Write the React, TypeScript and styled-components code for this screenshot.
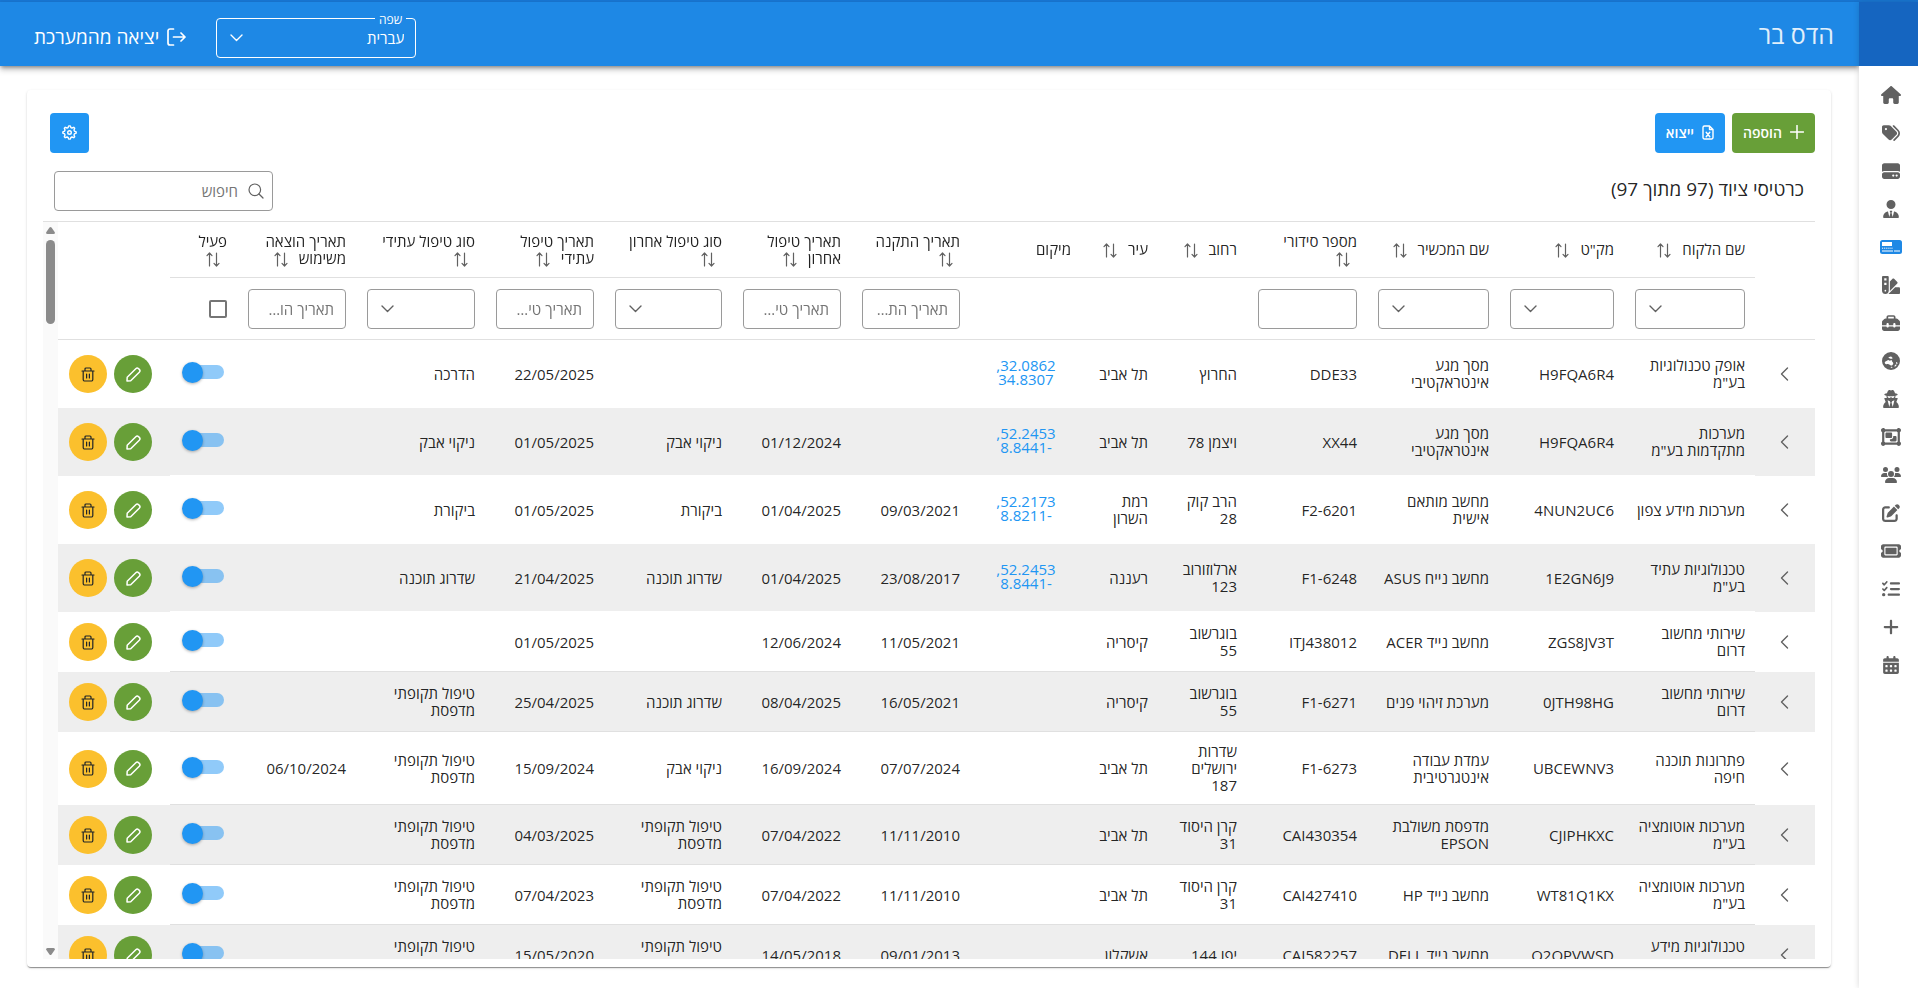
import React from "react";
import styled, { createGlobalStyle } from "styled-components";
import {
  FaHouse,
  FaTags,
  FaHardDrive,
  FaUserTie,
  FaSwatchbook,
  FaToolbox,
  FaEarthOceania,
  FaUserSecret,
  FaObjectGroup,
  FaUsers,
  FaPenToSquare,
  FaTicket,
  FaListCheck,
  FaPlus,
  FaCalendarDays,
} from "react-icons/fa6";

const color = {
  text: "rgba(0, 0, 0, 0.87)",
  muted: "#757575",
  icon: "#616161",
  line: "#e0e0e0",
  field: "#9a9a9a",
  stripe: "#eeeeee",
  header: "#1e88e5",
  brand: "#1565c0",
  top: "#1976d2",
  primary: "#2196f3",
  success: "#689f38",
  warning: "#fbc02d",
};

const GlobalStyle = createGlobalStyle`
  * { box-sizing: border-box; }
  body {
    margin: 0;
    background: #fff;
    color: ${color.text};
    font-family: "Open Sans", "Noto Sans", sans-serif;
    font-size: 15px;
    line-height: 17px;
  }
  button, input, select { font: inherit; color: inherit; }
`;

/* ---------- shell ---------- */

const Shell = styled.div`
  display: flex;
  height: 100vh;
  border-top: 2px solid ${color.top};
`;

const Sidebar = styled.nav`
  flex: none;
  display: flex;
  flex-direction: column;
  width: 59px;
  background: #fff;
  box-shadow: 0 0 6px rgba(0, 0, 0, 0.16);
  z-index: 2;
`;

const Brand = styled.div`
  height: 64px;
  background: ${color.brand};
`;

const NavList = styled.ul`
  display: flex;
  flex-direction: column;
  margin: 0;
  padding: 10px 0 0 5px;
  list-style: none;
`;

const NavLink = styled.a<{ $active?: boolean }>`
  display: flex;
  align-items: center;
  justify-content: center;
  height: 38px;
  color: ${(p) => (p.$active ? color.header : color.icon)};

  svg {
    width: ${(p) => (p.$active ? 22 : 20)}px;
    height: ${(p) => (p.$active ? 14 : 18)}px;
  }
`;

const Main = styled.div`
  flex: 1;
  min-width: 0;
  display: flex;
  flex-direction: column;
`;

const Header = styled.header`
  flex: none;
  display: flex;
  align-items: center;
  gap: 30px;
  height: 64px;
  padding: 0 25px 0 34px;
  background: ${color.header};
  color: #fff;
  box-shadow: 0 2px 4px -1px rgba(0, 0, 0, 0.4), 0 4px 6px rgba(0, 0, 0, 0.2);
  z-index: 1;
`;

const UserName = styled.h1`
  flex: 1;
  margin: 0;
  font-size: 25px;
  line-height: 32px;
  font-weight: 400;
  opacity: 0.87;
`;

const LanguageField = styled.div`
  position: relative;
  margin-top: 8px;
  width: 200px;
`;

const LanguageLabel = styled.label`
  position: absolute;
  top: -7px;
  right: 10px;
  padding: 0 4px;
  background: ${color.header};
  font-size: 12px;
  line-height: 17px;
`;

const Logout = styled.button`
  display: flex;
  align-items: center;
  gap: 8px;
  margin-top: 6px;
  padding: 0;
  border: 0;
  background: none;
  font-size: 19px;
  line-height: 24px;
  font-weight: 500;
  cursor: pointer;
`;

/* ---------- fields ---------- */

const SelectBox = styled.div<{ $light?: boolean }>`
  position: relative;
  color: ${(p) => (p.$light ? "#fff" : color.icon)};

  select {
    appearance: none;
    display: block;
    width: 100%;
    height: 40px;
    padding: 0 11px;
    border: 1px solid ${(p) => (p.$light ? "#fff" : color.field)};
    border-radius: 4px;
    background: transparent;
  }

  option { color: ${color.text}; }

  svg {
    position: absolute;
    left: 14px;
    top: 16px;
    pointer-events: none;
  }
`;

const TextField = styled.input`
  display: block;
  width: 100%;
  height: 40px;
  padding: 0 11px 0 12px;
  border: 1px solid ${color.field};
  border-radius: 4px;
  background: #fff;
  text-overflow: ellipsis;

  &::placeholder { color: ${color.muted}; opacity: 1; text-overflow: ellipsis; }
`;

const SearchField = styled.div`
  position: relative;
  width: 219px;

  input { padding-inline-start: 34px; }

  svg {
    position: absolute;
    right: 9px;
    top: 12px;
    color: ${color.icon};
  }
`;

const CheckBox = styled.input`
  appearance: none;
  display: block;
  width: 18px;
  height: 18px;
  margin: 0;
  border: 2px solid ${color.muted};
  border-radius: 2px;
`;

const Toggle = styled.input`
  appearance: none;
  position: relative;
  display: block;
  width: 38px;
  height: 14px;
  margin: 0 3px 4px;
  border-radius: 7px;
  background: rgba(33, 150, 243, 0.5);
  cursor: pointer;

  &::before {
    content: "";
    position: absolute;
    top: -3px;
    left: -4px;
    width: 21px;
    height: 21px;
    border-radius: 50%;
    background: ${color.primary};
    box-shadow: 0 1px 3px rgba(0, 0, 0, 0.3);
  }
`;

/* ---------- card ---------- */

const Card = styled.main`
  flex: 1;
  min-height: 0;
  display: flex;
  flex-direction: column;
  margin: 24px 28px 21px 27px;
  padding: 23px 16px 8px;
  border-radius: 4px;
  background: #fff;
  box-shadow: 0 2px 1px -1px rgba(0, 0, 0, 0.28), 0 1px 1px rgba(0, 0, 0, 0.16),
    0 1px 3px rgba(0, 0, 0, 0.12);
`;

const Toolbar = styled.div`
  display: flex;
  gap: 7px;
  padding-left: 7px;
`;

const Spacer = styled.div`
  flex: 1;
`;

const ActionButton = styled.button<{ $tone: "primary" | "success" }>`
  display: flex;
  align-items: center;
  justify-content: center;
  gap: 8px;
  height: 40px;
  min-width: 39px;
  padding: 0 11px 2px;
  border: 0;
  border-radius: 4px;
  background: ${(p) => color[p.$tone]};
  color: #fff;
  font-size: 14px;
  font-weight: 600;
  cursor: pointer;
`;

const TableTop = styled.div`
  display: flex;
  align-items: center;
  justify-content: space-between;
  padding: 18px 11px 10px;
  border-bottom: 1px solid ${color.line};
`;

const TableTitle = styled.h2`
  margin: 0 0 4px;
  font-size: 19px;
  line-height: 24px;
  font-weight: 400;
`;

const TableArea = styled.div`
  flex: 1;
  min-height: 0;
  display: flex;
`;

const Viewport = styled.div`
  flex: 1;
  min-width: 0;
  overflow: auto;
  scrollbar-width: none;
`;

const ScrollTrack = styled.div`
  flex: none;
  display: flex;
  flex-direction: column;
  align-items: center;
  width: 15px;
  padding: 5px 0 4px;
  background: #fafafa;
  color: #8b8b8b;
`;

const ScrollThumb = styled.div`
  width: 9px;
  height: 84px;
  margin: 6px 0 auto;
  border-radius: 5px;
  background: currentColor;
`;

/* ---------- table ---------- */

const Table = styled.table`
  width: 100%;
  table-layout: fixed;
  border-collapse: separate;
  border-spacing: 0;

  thead {
    position: sticky;
    top: 0;
    z-index: 1;
    background: #fff;
  }
`;

const Column = styled.col<{ $width: number }>`
  width: ${(p) => p.$width}px;
`;

const HeadCell = styled.th<{ $bare?: boolean }>`
  height: 56px;
  padding: 0 10px 0 11px;
  border-bottom: 1px solid ${(p) => (p.$bare ? "transparent" : color.line)};
  font-weight: 400;
  text-align: right;

  svg {
    margin-inline-start: 7px;
    vertical-align: -3px;
  }
`;

const FilterCell = styled.td`
  height: 62px;
  padding: 0 10px 0 11px;
  border-bottom: 1px solid ${color.line};
`;

const Row = styled.tr<{ $located: boolean }>`
  height: ${(p) => (p.$located ? 68 : 60)}px;
  --rule: ${(p) => (p.$located ? "#fff" : color.line)};

  &:nth-child(even) { background: ${color.stripe}; }
`;

const Cell = styled.td<{ $frozen?: boolean }>`
  padding: 11px 10px 11px 11px;
  text-align: right;
  white-space: pre-line;
  box-shadow: ${(p) => (p.$frozen ? "none" : "inset 0 -1px var(--rule)")};
`;

const ExpandButton = styled.button`
  display: flex;
  margin: 0 auto;
  padding: 0 2px 0 0;
  border: 0;
  background: none;
  color: ${color.icon};
  cursor: pointer;
`;

const MapLink = styled.a`
  display: block;
  padding-bottom: 4px;
  line-height: 14px;
  text-align: center;
  text-decoration: none;
  color: ${color.primary};
`;

const RowActions = styled.div`
  display: flex;
  justify-content: flex-end;
  gap: 7px;
`;

const RoundButton = styled.button<{ $tone: "success" | "warning" }>`
  flex: none;
  display: flex;
  align-items: center;
  justify-content: center;
  width: 38px;
  height: 38px;
  padding: 0;
  border: 0;
  border-radius: 50%;
  background: ${(p) => color[p.$tone]};
  color: ${(p) => (p.$tone === "warning" ? "#212529" : "#fff")};
  cursor: pointer;
`;

/* ---------- icons ---------- */

const lineIcon = {
  fill: "none",
  stroke: "currentColor",
  strokeLinecap: "round",
  strokeLinejoin: "round",
} as const;

const ChevronDown = () => (
  <svg width="13" height="8" viewBox="0 0 13 8" {...lineIcon} strokeWidth="1.4">
    <path d="M1 1l5.5 5.5L12 1" />
  </svg>
);

const ChevronLeft = () => (
  <svg width="9" height="14" viewBox="0 0 9 14" {...lineIcon} strokeWidth="1.4">
    <path d="M7.5 1L1.500 7l6 6" />
  </svg>
);

const SortIcon = () => (
  <svg width="14" height="15" viewBox="0 0 14 15" {...lineIcon} strokeWidth="1.2" stroke={color.icon}>
    <path d="M3.500 14V1M1 3.600L3.500 1 6 3.600M10.500 1v13M8 11.400L10.500 14l2.500-2.600" />
  </svg>
);

const SearchIcon = () => (
  <svg width="16" height="16" viewBox="0 0 16 16" {...lineIcon} strokeWidth="1.2">
    <circle cx="6.800" cy="6.800" r="5.800" />
    <path d="M11 11l4 4" />
  </svg>
);

const LogoutIcon = () => (
  <svg width="19" height="18" viewBox="0 0 19 18" {...lineIcon} strokeWidth="1.700">
    <path d="M6.500 1H3a2 2 0 0 0-2 2v12a2 2 0 0 0 2 2h3.500M6.500 9H18M14 5l4 4-4 4" />
  </svg>
);

const PlusIcon = () => (
  <svg width="14" height="14" viewBox="0 0 14 14" {...lineIcon} strokeWidth="1.500">
    <path d="M7 0.500v13M0.500 7h13" />
  </svg>
);

const ExcelIcon = () => (
  <svg width="12" height="15" viewBox="0 0 12 15" {...lineIcon} strokeWidth="1.400">
    <path d="M7.500 1H2.500A1.500 1.500 0 0 0 1 2.500v10A1.500 1.500 0 0 0 2.500 14h7a1.500 1.500 0 0 0 1.500-1.500V4.500zM7.500 1v3.500H11M4.200 7.200l3.600 4.600M7.800 7.200l-3.600 4.600" />
  </svg>
);

/* Eight rounded teeth around a hub, four outline points to a tooth. */
const gearOutline = Array.from({ length: 32 }, (_, i) => {
  const radius = i % 4 < 2 ? 6.7 : 5.1;
  const angle = ((i - 0.5) / 32) * 2 * Math.PI;
  return `${(7.5 + radius * Math.sin(angle)).toFixed(2)},${(7.5 - radius * Math.cos(angle)).toFixed(2)}`;
}).join(" ");

const GearIcon = () => (
  <svg width="15" height="15" viewBox="0 0 15 15" {...lineIcon} strokeWidth="1.400">
    <polygon points={gearOutline} />
    <circle cx="7.500" cy="7.500" r="1.800" />
  </svg>
);

const PencilIcon = () => (
  <svg width="15" height="15" viewBox="0 0 15 15" {...lineIcon} strokeWidth="1.500">
    <path d="M1 14l.2-3.700 8.600-8.600a2 2 0 0 1 2.800 0l.7.700a2 2 0 0 1 0 2.800L4.700 13.800z" />
  </svg>
);

const TrashIcon = () => (
  <svg width="14" height="15" viewBox="0 0 14 15" {...lineIcon} strokeWidth="1.200">
    <path d="M1 4h12M4 4V2a1 1 0 0 1 1-1h4a1 1 0 0 1 1 1v2M2.200 4v8.500A1.500 1.500 0 0 0 3.700 14h6.600a1.500 1.500 0 0 0 1.500-1.500V4M5.600 7v4M8.400 7v4" />
  </svg>
);

const DeviceIcon = () => (
  <svg viewBox="0 0 22 14" fill="none">
    <rect width="22" height="14" rx="2.500" fill="currentColor" />
    <rect x="2" y="2" width="10" height="4" fill="#fff" />
    <path d="M2 8.200h11" stroke="#fff" strokeDasharray="1.200 0.900" />
    <path d="M2 11h11M14 11h6" stroke="#fff" />
  </svg>
);

const ArrowGlyph = ({ down = false }: { down?: boolean }) => (
  <svg width="9" height="7" viewBox="0 0 9 7" fill="currentColor">
    <path d={down ? "M0 1.500Q0 0 1.500 0h6Q9 0 9 1.500L5.500 6.500Q4.500 7.500 3.500 6.500z" : "M0 5.500Q0 7 1.500 7h6Q9 7 9 5.500L5.500.5Q4.500-.5 3.500.5z"} />
  </svg>
);

/* ---------- data ---------- */

const navItems = [
  { label: "בית", icon: <FaHouse /> },
  { label: "תגיות", icon: <FaTags /> },
  { label: "מלאי", icon: <FaHardDrive /> },
  { label: "לקוחות", icon: <FaUserTie /> },
  { label: "כרטיסי ציוד", icon: <DeviceIcon />, active: true },
  { label: "דגמים", icon: <FaSwatchbook /> },
  { label: "כלים", icon: <FaToolbox /> },
  { label: "אזורים", icon: <FaEarthOceania /> },
  { label: "סוכנים", icon: <FaUserSecret /> },
  { label: "קבוצות", icon: <FaObjectGroup /> },
  { label: "משתמשים", icon: <FaUsers /> },
  { label: "עריכה", icon: <FaPenToSquare /> },
  { label: "כרטיסים", icon: <FaTicket /> },
  { label: "משימות", icon: <FaListCheck /> },
  { label: "חדש", icon: <FaPlus /> },
  { label: "יומן", icon: <FaCalendarDays /> },
];

type Filter = "select" | "text" | "date" | "check" | "none";

type ColumnDef = {
  title: string;
  width: number;
  filter: Filter;
  sortable?: boolean;
  sortBelow?: boolean;
};

const columns: ColumnDef[] = [
  { title: "שם הלקוח", width: 131, filter: "select" },
  { title: 'מק"ט', width: 125, filter: "select" },
  { title: "שם המכשיר", width: 132, filter: "select" },
  { title: "מספר סידורי", width: 120, filter: "text", sortBelow: true },
  { title: "רחוב", width: 89, filter: "none" },
  { title: "עיר", width: 77, filter: "none" },
  { title: "מיקום", width: 111, filter: "none", sortable: false },
  { title: "תאריך התקנה", width: 119, filter: "date", sortBelow: true },
  { title: "תאריך טיפול אחרון", width: 119, filter: "date" },
  { title: "סוג טיפול אחרון", width: 128, filter: "select", sortBelow: true },
  { title: "תאריך טיפול עתידי", width: 119, filter: "date" },
  { title: "סוג טיפול עתידי", width: 129, filter: "select", sortBelow: true },
  { title: "תאריך הוצאה משימוש", width: 119, filter: "date" },
  { title: "פעיל", width: 67, filter: "check", sortBelow: true },
];

type Item = {
  client: string;
  sku: string;
  device: string;
  serial: string;
  street: string;
  city: string;
  location?: string;
  dates: [string, string, string, string];
  types: [string, string];
};

const periodic = "טיפול תקופתי\nמדפסת";

const items: Item[] = [
  { client: 'אופק טכנולוגיות\nבע"מ', sku: "H9FQA6R4", device: "מסך מגע\nאינטראקטיבי", serial: "DDE33", street: "החרוץ", city: "תל אביב", location: "32.0862,\n34.8307", dates: ["", "", "22/05/2025", ""], types: ["", "הדרכה"] },
  { client: 'מערכות\nמתקדמות בע"מ', sku: "H9FQA6R4", device: "מסך מגע\nאינטראקטיבי", serial: "XX44", street: "ויצמן 78", city: "תל אביב", location: "52.2453,\n-8.8441", dates: ["", "01/12/2024", "01/05/2025", ""], types: ["ניקוי אבק", "ניקוי אבק"] },
  { client: "מערכות מידע צפון", sku: "4NUN2UC6", device: "מחשב מותאם\nאישית", serial: "F2-6201", street: "הרב קוק\n28", city: "רמת\nהשרון", location: "52.2173,\n-8.8211", dates: ["09/03/2021", "01/04/2025", "01/05/2025", ""], types: ["ביקורת", "ביקורת"] },
  { client: 'טכנולוגיות עתיד\nבע"מ', sku: "1E2GN6J9", device: "מחשב נייח ASUS", serial: "F1-6248", street: "ארלוזורוב\n123", city: "רעננה", location: "52.2453,\n-8.8441", dates: ["23/08/2017", "01/04/2025", "21/04/2025", ""], types: ["שדרוג תוכנה", "שדרוג תוכנה"] },
  { client: "שירותי מחשוב\nדרום", sku: "ZGS8JV3T", device: "מחשב נייד ACER", serial: "ITJ438012", street: "בוגרשוב\n55", city: "קיסריה", dates: ["11/05/2021", "12/06/2024", "01/05/2025", ""], types: ["", ""] },
  { client: "שירותי מחשוב\nדרום", sku: "0JTH98HG", device: "מערכת זיהוי פנים", serial: "F1-6271", street: "בוגרשוב\n55", city: "קיסריה", dates: ["16/05/2021", "08/04/2025", "25/04/2025", ""], types: ["שדרוג תוכנה", periodic] },
  { client: "פתרונות תוכנה\nחיפה", sku: "UBCEWNV3", device: "עמדת עבודה\nאינטגרטיבית", serial: "F1-6273", street: "שדרות\nירושלים\n187", city: "תל אביב", dates: ["07/07/2024", "16/09/2024", "15/09/2024", "06/10/2024"], types: ["ניקוי אבק", periodic] },
  { client: 'מערכות אוטומציה\nבע"מ', sku: "CJIPHKXC", device: "מדפסת משולבת\nEPSON", serial: "CAI430354", street: "קרן היסוד\n31", city: "תל אביב", dates: ["11/11/2010", "07/04/2022", "04/03/2025", ""], types: [periodic, periodic] },
  { client: 'מערכות אוטומציה\nבע"מ', sku: "WT81Q1KX", device: "מחשב נייד HP", serial: "CAI427410", street: "קרן היסוד\n31", city: "תל אביב", dates: ["11/11/2010", "07/04/2022", "07/04/2023", ""], types: [periodic, periodic] },
  { client: 'טכנולוגיות מידע\nבע"מ', sku: "Q2QPVWSD", device: "מחשב נייד DELL", serial: "CAI582257", street: "יפו 144", city: "אשקלון", dates: ["09/01/2013", "14/05/2018", "15/05/2020", ""], types: [periodic, periodic] },
];

/* ---------- parts ---------- */

function ColumnFilter({ column }: { column: ColumnDef }) {
  switch (column.filter) {
    case "select":
      return (
        <SelectBox>
          <select aria-label={column.title}>
            <option value="" />
          </select>
          <ChevronDown />
        </SelectBox>
      );
    case "text":
      return <TextField type="text" aria-label={column.title} />;
    case "date":
      return <TextField type="text" aria-label={column.title} placeholder={column.title} />;
    case "check":
      return <CheckBox type="checkbox" aria-label={column.title} />;
    default:
      return null;
  }
}

function ItemRow({ item }: { item: Item }) {
  return (
    <Row $located={Boolean(item.location)}>
      <Cell $frozen>
        <ExpandButton aria-label="הרחבה">
          <ChevronLeft />
        </ExpandButton>
      </Cell>
      <Cell>{item.client}</Cell>
      <Cell>{item.sku}</Cell>
      <Cell>{item.device}</Cell>
      <Cell>{item.serial}</Cell>
      <Cell>{item.street}</Cell>
      <Cell>{item.city}</Cell>
      <Cell>{item.location && <MapLink href="#map">{item.location}</MapLink>}</Cell>
      <Cell>{item.dates[0]}</Cell>
      <Cell>{item.dates[1]}</Cell>
      <Cell>{item.types[0]}</Cell>
      <Cell>{item.dates[2]}</Cell>
      <Cell>{item.types[1]}</Cell>
      <Cell>{item.dates[3]}</Cell>
      <Cell>
        <Toggle type="checkbox" role="switch" aria-label="פעיל" defaultChecked />
      </Cell>
      <Cell $frozen>
        <RowActions>
          <RoundButton $tone="success" aria-label="עריכה">
            <PencilIcon />
          </RoundButton>
          <RoundButton $tone="warning" aria-label="מחיקה">
            <TrashIcon />
          </RoundButton>
        </RowActions>
      </Cell>
    </Row>
  );
}

export default function App() {
  return (
    <Shell dir="rtl" lang="he">
      <GlobalStyle />
      <Sidebar aria-label="ראשי">
        <Brand />
        <NavList>
          {navItems.map((n) => (
            <li key={n.label}>
              <NavLink href="#" $active={n.active} aria-label={n.label}>
                {n.icon}
              </NavLink>
            </li>
          ))}
        </NavList>
      </Sidebar>
      <Main>
        <Header>
          <UserName>הדס בר</UserName>
          <LanguageField>
            <SelectBox $light>
              <select id="language" defaultValue="he">
                <option value="he">עברית</option>
                <option value="en">English</option>
              </select>
              <ChevronDown />
            </SelectBox>
            <LanguageLabel htmlFor="language">שפה</LanguageLabel>
          </LanguageField>
          <Logout>
            <LogoutIcon />
            יציאה מהמערכת
          </Logout>
        </Header>
        <Card>
          <Toolbar>
            <ActionButton $tone="success">
              <PlusIcon />
              הוספה
            </ActionButton>
            <ActionButton $tone="primary">
              <ExcelIcon />
              ייצוא
            </ActionButton>
            <Spacer />
            <ActionButton $tone="primary" aria-label="הגדרות">
              <GearIcon />
            </ActionButton>
          </Toolbar>
          <TableTop>
            <TableTitle>כרטיסי ציוד (97 מתוך 97)</TableTitle>
            <SearchField>
              <TextField type="text" placeholder="חיפוש" aria-label="חיפוש" />
              <SearchIcon />
            </SearchField>
          </TableTop>
          <TableArea>
            <Viewport>
              <Table>
                <colgroup>
                  <Column $width={60} />
                  {columns.map((c) => (
                    <Column key={c.title} $width={c.width} />
                  ))}
                  <Column $width={112} />
                </colgroup>
                <thead>
                  <tr>
                    <HeadCell $bare />
                    {columns.map((c) => (
                      <HeadCell key={c.title} scope="col">
                        {c.title} {c.sortBelow && <br />}
                        {c.sortable !== false && <SortIcon />}
                      </HeadCell>
                    ))}
                    <HeadCell $bare />
                  </tr>
                  <tr>
                    <FilterCell />
                    {columns.map((c) => (
                      <FilterCell key={c.title}>
                        <ColumnFilter column={c} />
                      </FilterCell>
                    ))}
                    <FilterCell />
                  </tr>
                </thead>
                <tbody>
                  {items.map((item) => (
                    <ItemRow key={item.serial} item={item} />
                  ))}
                </tbody>
              </Table>
            </Viewport>
            <ScrollTrack aria-hidden>
              <ArrowGlyph />
              <ScrollThumb />
              <ArrowGlyph down />
            </ScrollTrack>
          </TableArea>
        </Card>
      </Main>
    </Shell>
  );
}
